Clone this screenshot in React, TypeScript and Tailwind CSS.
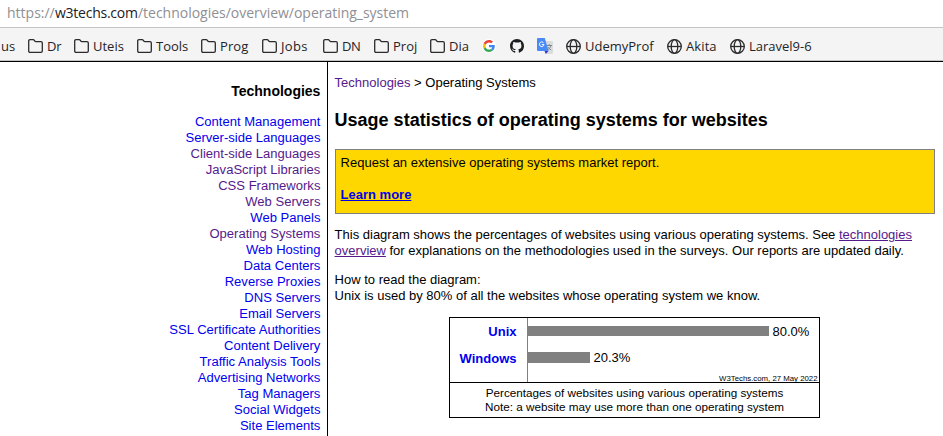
import React from "react";

const UI = "font-['Open_Sans','Noto_Sans',sans-serif]";

function FolderIcon() {
  return (
    <svg width="15" height="14" viewBox="0 0 15 14" fill="none" stroke="#2b2b2e" strokeWidth="1.3" strokeLinejoin="round" className="-mt-px shrink-0">
      <path d="M.7 2c0-.8.5-1.3 1.3-1.3h3.2c.5 0 .8.2 1.1.6l.6.9c.2.3.5.4.9.4h5.2c.8 0 1.3.5 1.3 1.3v8.1c0 .8-.5 1.3-1.3 1.3H2c-.8 0-1.3-.5-1.3-1.3z" />
    </svg>
  );
}

function GlobeIcon() {
  return (
    <svg width="15" height="15" viewBox="0 0 15 15" fill="none" stroke="#2b2b2e" strokeWidth="1.3" className="shrink-0">
      <circle cx="7.5" cy="7.5" r="6.8" />
      <ellipse cx="7.5" cy="7.5" rx="3.3" ry="6.8" />
      <path d="M.7 7.5h13.6" />
    </svg>
  );
}

function GoogleIcon() {
  return (
    <span className="flex size-[14px] shrink-0 items-center justify-center rounded-full bg-white">
      <svg width="12" height="12" viewBox="0 0 48 48">
        <path fill="#EA4335" d="M24 9.5c3.54 0 6.71 1.22 9.21 3.6l6.85-6.85C35.9 2.38 30.47 0 24 0 14.62 0 6.51 5.38 2.56 13.22l7.98 6.19C12.43 13.72 17.74 9.5 24 9.5z" />
        <path fill="#4285F4" d="M46.98 24.55c0-1.57-.15-3.09-.38-4.55H24v9.02h12.94c-.58 2.96-2.26 5.48-4.78 7.18l7.73 6c4.51-4.18 7.09-10.36 7.09-17.65z" />
        <path fill="#FBBC05" d="M10.53 28.59c-.48-1.45-.76-2.99-.76-4.59s.27-3.14.76-4.59l-7.98-6.19C.92 16.46 0 20.12 0 24s.92 7.54 2.56 10.78l7.97-6.19z" />
        <path fill="#34A853" d="M24 48c6.48 0 11.93-2.13 15.89-5.81l-7.73-6c-2.15 1.45-4.92 2.3-8.16 2.3-6.26 0-11.57-4.22-13.47-9.91l-7.98 6.19C6.51 42.62 14.62 48 24 48z" />
      </svg>
    </span>
  );
}

function GithubIcon() {
  return (
    <svg width="14" height="14" viewBox="0 0 16 16" fill="#1b1f23" className="shrink-0">
      <path d="M8 0C3.58 0 0 3.58 0 8c0 3.54 2.29 6.53 5.47 7.59.4.07.55-.17.55-.38 0-.19-.01-.82-.01-1.49-2.01.37-2.53-.49-2.69-.94-.09-.23-.48-.94-.82-1.13-.28-.15-.68-.52-.01-.53.63-.01 1.08.58 1.23.82.72 1.21 1.87.87 2.33.66.07-.52.28-.87.51-1.07-1.78-.2-3.64-.89-3.64-3.95 0-.87.31-1.59.82-2.15-.08-.2-.36-1.02.08-2.12 0 0 .67-.21 2.2.82.64-.18 1.32-.27 2-.27s1.36.09 2 .27c1.53-1.04 2.2-.82 2.2-.82.44 1.1.16 1.92.08 2.12.51.56.82 1.27.82 2.15 0 3.07-1.87 3.75-3.65 3.95.29.25.54.73.54 1.48 0 1.07-.01 1.93-.01 2.2 0 .21.15.46.55.38A8.01 8.01 0 0 0 16 8c0-4.42-3.58-8-8-8z" />
    </svg>
  );
}

function TranslateIcon() {
  return (
    <svg width="16" height="16" viewBox="0 0 16 16" className="shrink-0">
      <path d="M6 3h9a1 1 0 0 1 1 1v11a1 1 0 0 1-1 1H9z" fill="#dcdcdc" />
      <path d="M9.5 7.5h5.5M12.2 6v1.5M14 7.5c-.5 2-1.8 3.4-3.3 4.5M10.8 8.8c.7 1.3 1.8 2.4 3.4 3.2" stroke="#73808a" strokeWidth=".9" fill="none" />
      <path d="M7.5 13h4l-2.7 3z" fill="#3439c8" />
      <path d="M1 0h6.8l3.8 13H1a1 1 0 0 1-1-1V1a1 1 0 0 1 1-1z" fill="#4a8af4" />
      <path d="M6.5 4.8A2.3 2.3 0 1 0 7 6.6H4.8" stroke="#fff" strokeWidth="1" fill="none" />
    </svg>
  );
}

type Bookmark = { label: string; kind: "folder" | "globe"; box: string; text: string };

const folders: Bookmark[] = [
  { label: "Dr", kind: "folder", box: "w-[46px]", text: "tracking-[-0.3px]" },
  { label: "Uteis", kind: "folder", box: "w-[63px]", text: "tracking-[0px]" },
  { label: "Tools", kind: "folder", box: "w-[64px]", text: "tracking-[0px]" },
  { label: "Prog", kind: "folder", box: "w-[61px]", text: "tracking-[0.1px]" },
  { label: "Jobs", kind: "folder", box: "w-[61px]", text: "tracking-[0.3px]" },
  { label: "DN", kind: "folder", box: "w-[51px]", text: "tracking-[-0.4px]" },
  { label: "Proj", kind: "folder", box: "w-[56px]", text: "tracking-[0px]" },
  { label: "Dia", kind: "folder", box: "w-[52px]", text: "tracking-[0px]" },
];

const sites: Bookmark[] = [
  { label: "UdemyProf", kind: "globe", box: "w-[101px]", text: "tracking-[0px]" },
  { label: "Akita", kind: "globe", box: "w-[63px]", text: "tracking-[0.1px]" },
  { label: "Laravel9-6", kind: "globe", box: "w-[90px]", text: "tracking-[0px]" },
];

function BookmarkItem({ item }: { item: Bookmark }) {
  return (
    <div className={`flex shrink-0 items-center gap-1 whitespace-nowrap ${item.box}`}>
      {item.kind === "folder" ? <FolderIcon /> : <GlobeIcon />}
      <span className={item.text}>{item.label}</span>
    </div>
  );
}

const categories: [string, boolean][] = [
  ["Content Management", false],
  ["Server-side Languages", false],
  ["Client-side Languages", true],
  ["JavaScript Libraries", true],
  ["CSS Frameworks", true],
  ["Web Servers", true],
  ["Web Panels", false],
  ["Operating Systems", true],
  ["Web Hosting", false],
  ["Data Centers", false],
  ["Reverse Proxies", false],
  ["DNS Servers", false],
  ["Email Servers", false],
  ["SSL Certificate Authorities", false],
  ["Content Delivery", false],
  ["Traffic Analysis Tools", false],
  ["Advertising Networks", false],
  ["Tag Managers", false],
  ["Social Widgets", false],
  ["Site Elements", false],
];

export default function App() {
  return (
    <div className="flex h-[436px] w-[943px] flex-col overflow-hidden bg-white font-['Liberation_Sans',Arial,sans-serif] text-[13px] leading-4 text-black">
      <header className={`shrink-0 ${UI}`}>
        <div className="flex h-[28px] items-center whitespace-nowrap border-b border-[#c4c4c6] pb-px pl-[7px] text-[14px] text-[#8f8f94]">
          <span className="w-[48px] tracking-[0px]">https://</span>
          <span className="w-[83px] tracking-[-0.25px] text-[#202024]">w3techs.com</span>
          <span className="tracking-[-0.02px]">/technologies/overview/operating_system</span>
        </div>
        <div className="flex h-[33px] items-center border-b border-[#c4c4c6] bg-[#f4f4f4] pt-1 pl-px text-[13px] text-[#242428]">
          <span className="w-[27px]">us</span>
          {folders.map((f) => <BookmarkItem key={f.label} item={f} />)}
          <span className="w-[28px]"><GoogleIcon /></span>
          <span className="w-[27px]"><GithubIcon /></span>
          <span className="w-[29px]"><TranslateIcon /></span>
          {sites.map((s) => <BookmarkItem key={s.label} item={s} />)}
        </div>
      </header>

      <div className="flex grow border-t border-black">
        <nav className="flex w-[328px] shrink-0 flex-col border-r border-black pt-[21px] pr-[6.6px] text-right">
          <h2 className="mb-[15px] text-[14px] leading-4 font-bold">Technologies</h2>
          {categories.map(([name, visited]) => (
            <a key={name} className={`text-[13.05px] ${visited ? "text-[#551a8b]" : "text-[#0000ee]"}`}>{name}</a>
          ))}
        </nav>

        <main className="flex w-[607px] shrink-0 flex-col pt-[13px] pl-[6.6px]">
          <p><a className="text-[#551a8b]">Technologies</a> &gt; Operating Systems</p>
          <h1 className="mt-[19px] text-[18px] leading-5 font-bold">Usage statistics of operating systems for websites</h1>
          <div className="mt-[19px] h-[65px] border border-[#808080] bg-[#ffd700] px-[5px] pt-[5px]">
            Request an extensive operating systems market report.
            <br /><br />
            <a className="font-bold text-[#0000ee] underline">Learn more</a>
          </div>
          <p className="mt-[13px]">
            This diagram shows the percentages of websites using various operating systems. See <a className="text-[#551a8b] underline">technologies overview</a> for explanations on the methodologies used in the surveys. Our reports are updated daily.
          </p>
          <p className="mt-[13px]">
            How to read the diagram:
            <br />
            Unix is used by 80% of all the websites whose operating system we know.
          </p>
          <section className="mt-[13px] ml-[114.4px] w-[371px] border border-black">
            <div className="flex h-[64px]">
              <div className="flex w-[77px] flex-col gap-[11px] pt-[6px] pr-[10.5px] text-right font-bold text-[#0000ee]">
                <span>Unix</span>
                <span>Windows</span>
              </div>
              <div className="flex grow flex-col border-l border-[#808080] pt-[6px]">
                <div className="flex h-4 items-start gap-[3.5px]">
                  <div className="mt-[2px] h-[10px] w-[241px] bg-[#808080]" />80.0%
                </div>
                <div className="mt-[10px] flex h-4 items-start gap-[3.5px]">
                  <div className="mt-[2px] h-[11px] w-[62px] bg-[#808080]" />20.3%
                </div>
                <div className="mt-[8px] pr-[1.5px] text-right text-[7.8px] leading-[10px]">W3Techs.com, 27 May 2022</div>
              </div>
            </div>
            <div className="h-[35px] border-t border-black pt-[3px] text-center text-[11.7px] leading-[14px]">
              Percentages of websites using various operating systems
              <br />
              Note: a website may use more than one operating system
            </div>
          </section>
        </main>
      </div>
    </div>
  );
}
